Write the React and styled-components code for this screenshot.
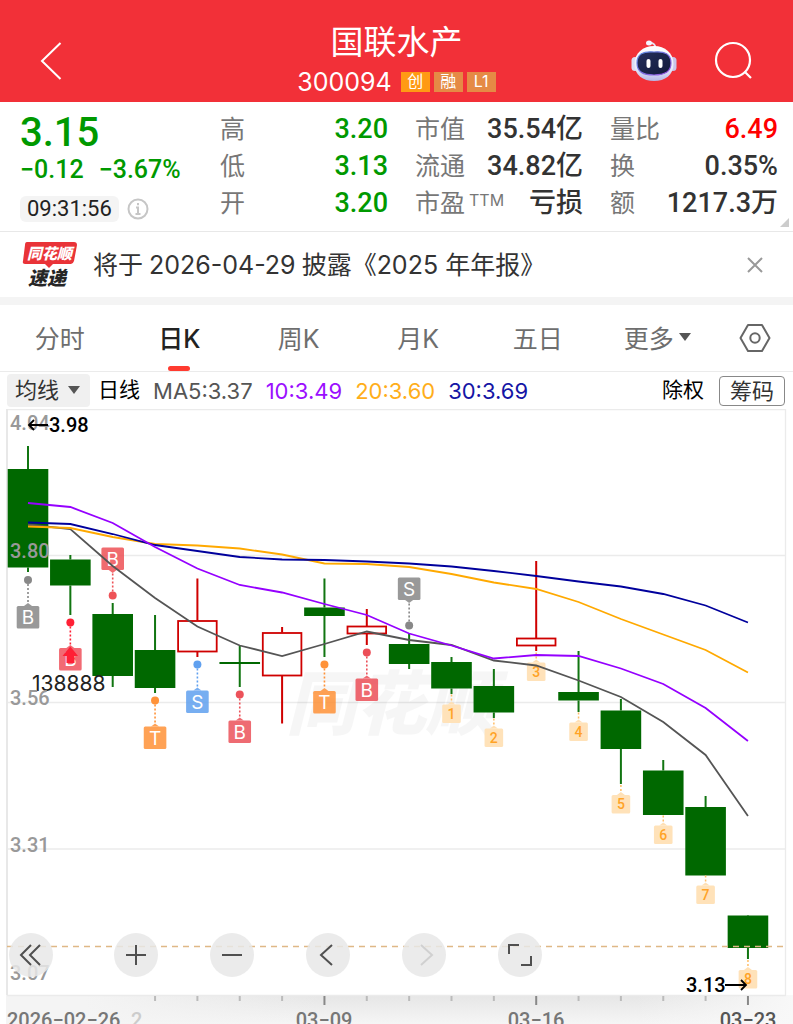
import React, { useState } from 'react';
import styled, { createGlobalStyle } from 'styled-components';

const ui = '"Inter", "Noto Sans CJK SC", sans-serif';
const din = '"Roboto", "Noto Sans CJK SC", sans-serif';

const GlobalStyle = createGlobalStyle`
	* {
		box-sizing: border-box;
	}

	body {
		margin: 0;
		background: #fff;
		color: #333;
		font-family: ${ui};
	}

	button {
		margin: 0;
		padding: 0;
		border: none;
		background: none;
		color: inherit;
		font: inherit;
		cursor: pointer;
	}

	svg {
		display: block;
	}
`;

const Header = styled.header`
	height: 102px;
	padding: 0 40px;
	display: grid;
	grid-template-columns: 1fr auto 1fr;
	align-items: center;
	background: #f23038;
	color: #fff;
`;

const BackButton = styled.button`
	justify-self: start;
	margin-top: 20px;
`;

const HeaderActions = styled.div`
	display: flex;
	justify-content: flex-end;
	align-items: center;
	gap: 36px;
	padding-top: 20px;
`;

const TitleBlock = styled.div`
	text-align: center;
	padding-top: 14px;
`;

const Title = styled.h1`
	margin: 0;
	font-size: 33px;
	font-weight: 400;
	line-height: 48px;
`;

const CodeRow = styled.div`
	display: flex;
	align-items: center;
	justify-content: center;
	gap: 4px;
	font-size: 25px;
	line-height: 32px;
`;

const Code = styled.span`
	margin-right: 5px;
`;

const Badge = styled.span`
	width: 29px;
	height: 20px;
	background: ${props => props.$color};
	font-size: 16px;
	line-height: 19px;
	text-align: center;
`;

const Quote = styled.section`
	position: relative;
	display: flex;
	padding: 9px 15px 9px 20px;
	border-bottom: 1px solid #e8e8e8;
`;

const PriceBlock = styled.div`
	width: 200px;
	font-family: ${din};
	font-weight: 500;
	color: #009900;
`;

const Price = styled.div`
	font-size: 40px;
	line-height: 44px;
`;

const Change = styled.div`
	display: flex;
	gap: 15px;
	font-size: 25px;
	line-height: 30px;
`;

const TimeRow = styled.div`
	display: flex;
	align-items: center;
	gap: 8px;
	margin-top: 11px;
`;

const Time = styled.time`
	padding: 0 7px;
	border-radius: 6px;
	background: #f4f4f4;
	color: #222;
	font-size: 22px;
	font-weight: 400;
	line-height: 26px;
`;

const Stats = styled.dl`
	flex: 1;
	margin: 0;
	display: grid;
	grid-template-columns: repeat(3, 1fr);
	column-gap: 27px;
`;

const Stat = styled.div`
	display: flex;
	justify-content: space-between;
	height: 37px;
	line-height: 37px;
	white-space: nowrap;
`;

const StatLabel = styled.dt`
	display: flex;
	color: #777;
	font-size: 25px;
`;

const Suffix = styled.span`
	margin-left: 4px;
	font-size: 16px;
	line-height: 30px;
`;

const StatValue = styled.dd`
	margin: 0;
	font-family: ${din};
	font-size: 27px;
	font-weight: 500;
	color: ${props => props.$color || '#333'};
`;

const Corner = styled.span`
	position: absolute;
	right: 4px;
	bottom: 4px;
	border-left: 9px solid transparent;
	border-bottom: 9px solid #ccc;
`;

const News = styled.section`
	display: flex;
	align-items: center;
	gap: 16px;
	height: 73px;
	padding: 0 28px 0 22px;
	border-bottom: 8px solid #f4f4f4;
`;

const NewsLink = styled.a`
	flex: 1;
	padding-bottom: 3px;
	color: #333;
	font-size: 25px;
	text-decoration: none;
	white-space: nowrap;
`;

const NewsDate = styled.span`
	margin: 0 6px;
`;

const Tabs = styled.nav`
	display: grid;
	grid-template-columns: repeat(6, 1fr) 76px;
	height: 67px;
	border-bottom: 1px solid #ebebeb;
`;

const Tab = styled.button`
	position: relative;
	display: flex;
	align-items: center;
	justify-content: center;
	gap: 5px;
	padding-bottom: 2px;
	color: ${props => (props.$active ? '#222' : '#6e6e6e')};
	font-size: 25px;
	font-weight: ${props => (props.$active ? 500 : 400)};

	&::after {
		content: '';
		position: absolute;
		bottom: 0;
		width: 22px;
		height: 5px;
		border-radius: 3px;
		background: ${props => (props.$active ? '#ff3b30' : 'transparent')};
	}
`;

const Caret = styled.span`
	border: 6px solid transparent;
	border-top: 8px solid #555;
	border-bottom: none;
`;

const SettingsButton = styled.button`
	display: flex;
	align-items: center;
	justify-content: center;
`;

const Legend = styled.div`
	display: flex;
	align-items: center;
	height: 37px;
	padding: 0 8px 0 7px;
	font-size: 22px;
	line-height: 28px;
	white-space: nowrap;
`;

const AverageButton = styled.button`
	display: flex;
	align-items: center;
	gap: 9px;
	height: 33px;
	padding: 0 10px 2px 8px;
	margin-right: 8px;
	border-radius: 4px;
	background: #f0f0f0;
`;

const Period = styled.span`
	margin-right: 13px;
	padding-bottom: 2px;
	color: #000;
	font-size: 21px;
`;

const Average = styled.span`
	margin-right: 13px;
	color: ${props => props.$color};
`;

const Rights = styled.button`
	margin-left: auto;
	margin-right: 15px;
	padding-bottom: 2px;
	color: #000;
	font-size: 21px;
`;

const Chips = styled.button`
	width: 66px;
	height: 30px;
	border: 1px solid #888;
	border-radius: 4px;
	line-height: 26px;
`;

const ChartArea = styled.main`
	position: relative;
`;

const Chart = styled.svg`
	width: 100%;
	height: auto;
	overflow: hidden;
`;

const ChartTools = styled.div`
	position: absolute;
	left: 9px;
	bottom: 47px;
	display: flex;
	gap: 52px;
`;

const ToolButton = styled.button`
	width: 44px;
	height: 44px;
	border-radius: 50%;
	background: rgba(232, 232, 232, 0.85);
	color: ${props => (props.disabled ? '#d0d0d0' : '#505050')};

	&:first-child {
		margin-right: 9px;
	}
`;

const stats = [
	{ label: '高', value: '3.20', color: '#009900' },
	{ label: '市值', value: '35.54亿' },
	{ label: '量比', value: '6.49', color: '#ff0000' },
	{ label: '低', value: '3.13', color: '#009900' },
	{ label: '流通', value: '34.82亿' },
	{ label: '换', value: '0.35%' },
	{ label: '开', value: '3.20', color: '#009900' },
	{ label: '市盈', suffix: 'TTM', value: '亏损' },
	{ label: '额', value: '1217.3万' },
];

const tabs = ['分时', '日K', '周K', '月K', '五日', '更多'];

const averages = [
	{ text: 'MA5:3.37', color: '#555' },
	{ text: '10:3.49', color: '#9b0fff' },
	{ text: '20:3.60', color: '#ffae1a' },
	{ text: '30:3.69', color: '#1515a5' },
];

// chart geometry, in viewBox units
const STEP = 42.35;
const xAt = index => 28 + index * STEP;

// high, body top, body bottom, low, rising
const candles = [
	[446, 469, 567.5, 572],
	[555, 559.5, 585.5, 615],
	[603, 614, 676, 687],
	[615, 650, 688, 693],
	[578.5, 620.5, 652, 657, true],
	[646, 662, 664, 687],
	[627, 632.5, 676, 723.5, true],
	[578.5, 607.5, 616, 657],
	[609, 626, 634, 645, true],
	[634, 644, 664, 669],
	[657, 662, 688.5, 694],
	[669, 686, 712.5, 718],
	[561, 638, 646, 651, true],
	[651, 692, 700.5, 712],
	[699, 710.5, 749, 784],
	[760, 770.5, 815, 815],
	[796, 807, 875.5, 875.5],
	[916, 915.5, 948, 959],
];

const lines = [
	{
		color: '#555',
		ys: [524.5, 529, 566, 598, 626.5, 645.5, 656, 644, 631.5, 640, 645, 660.5, 665.5, 680.5, 697, 722, 755, 816],
	},
	{
		color: '#ffa900',
		ys: [526.5, 528, 537, 544, 545.5, 548.5, 554.5, 563.5, 564, 567, 574, 582.5, 589, 602, 619, 634.5, 650, 672.5],
	},
	{
		color: '#00009c',
		ys: [522.5, 524, 534, 545, 551, 557, 559.5, 560, 561.5, 563.5, 566.5, 571, 576, 581.5, 586.5, 594, 605.5, 622.5],
	},
	{
		color: '#9500ff',
		ys: [503, 507, 523, 547, 568.5, 585, 592.5, 604, 615, 633.5, 645.5, 658.5, 655, 656, 668.5, 684, 708, 741],
	},
];

const signals = [
	{ index: 0, letter: 'B', dot: 580, top: 606, color: '#888' },
	{ index: 1, letter: 'B', dot: 622.5, top: 648, color: '#f0515b', dotColor: '#ff2035' },
	{ index: 2, letter: 'B', dot: 595.5, top: 547.5, color: '#ee5257' },
	{ index: 3, letter: 'T', dot: 700.5, top: 726.5, color: '#ff9238' },
	{ index: 4, letter: 'S', dot: 664.5, top: 690.5, color: '#60a0ef' },
	{ index: 5, letter: 'B', dot: 694.5, top: 720.5, color: '#ec525a' },
	{ index: 7, letter: 'T', dot: 664.5, top: 691, color: '#ff9238' },
	{ index: 8, letter: 'B', dot: 652.5, top: 678.5, color: '#ec4f58' },
	{ index: 9, letter: 'S', dot: 625.5, top: 577.5, color: '#888' },
];

const counts = [704.5, 728.5, 662.5, 722.5, 795, 825.5, 885.5, 970];

const scale = [
	{ text: '4.04', y: 430 },
	{ text: '3.80', y: 558 },
	{ text: '3.56', y: 705 },
	{ text: '3.31', y: 852 },
	{ text: '3.07', y: 980 },
];

const Candle = ({ index, data }) => {
	const [high, top, bottom, low, rising] = data;
	const x = xAt(index);
	const color = rising ? '#cf0000' : '#006800';
	return (
		<g>
			<path d={`M${x} ${high}V${top}M${x} ${bottom}V${low}`} stroke={rising ? color : '#117511'} strokeWidth="2" />
			{rising ? (
				<rect x={x - 19.3} y={top + 0.5} width="38.6" height={bottom - top - 1} fill="none" stroke={color} strokeWidth="1.8" />
			) : (
				<rect x={x - 20.3} y={top} width="40.6" height={bottom - top} fill={color} />
			)}
		</g>
	);
};

const Signal = ({
	index, letter, dot, top, color, dotColor,
}) => {
	const x = xAt(index);
	const below = top > dot;
	const edge = below ? top : top + 22.5;
	const tip = below ? edge - 3 : edge + 3;
	return (
		<g>
			<path d={`M${x} ${dot}V${tip}`} stroke={dotColor || color} strokeWidth="1.6" strokeDasharray="2 2" />
			<circle cx={x} cy={dot} r="4" fill={dotColor || color} />
			<g opacity="0.85">
				<rect x={x - 11.3} y={top} width="22.6" height="22.5" rx="1.5" fill={color} />
				<path d={`M${x - 4} ${edge}L${x} ${tip}L${x + 4} ${edge}Z`} fill={color} />
			</g>
			<text x={x} y={top + 18} textAnchor="middle" fontFamily="Inter" fontSize="19" fill="#fff">{letter}</text>
		</g>
	);
};

const Count = ({ number, top }) => {
	const x = xAt(number + 9);
	return (
		<g>
			<path d={`M${x} ${top - 10}V${top - 3}`} stroke="#ffbd66" strokeWidth="1.5" strokeDasharray="2 2" />
			<path d={`M${x - 4} ${top}L${x} ${top - 3}L${x + 4} ${top}Z`} fill="#ffe0b5" />
			<rect x={x - 9.3} y={top} width="18.6" height="18.5" rx="1.5" fill="#ffe0b5" opacity="0.95" />
			<text x={x} y={top + 14} textAnchor="middle" fontFamily="Roboto" fontSize="14" fontWeight="500" fill="#ffa326">{number}</text>
		</g>
	);
};

const Robot = () => (
	<svg width="46" height="42" viewBox="0 0 46 42">
		<defs>
			<linearGradient id="shell" x1="0" y1="0" x2="0" y2="1">
				<stop offset="0" stopColor="#fff" />
				<stop offset="0.65" stopColor="#e8eafa" />
				<stop offset="1" stopColor="#b4b5e6" />
			</linearGradient>
			<linearGradient id="visor" x1="0" y1="0" x2="1" y2="1">
				<stop offset="0" stopColor="#252f5c" />
				<stop offset="1" stopColor="#12183a" />
			</linearGradient>
			<linearGradient id="rim" x1="0" y1="0" x2="1" y2="1">
				<stop offset="0" stopColor="#5c8fe5" />
				<stop offset="1" stopColor="#9a50df" />
			</linearGradient>
		</defs>
		<path d="M18 3Q24 2.5 24.5 8" fill="none" stroke="#e6e4f2" strokeWidth="1.8" />
		<ellipse cx="18" cy="3" rx="3" ry="2.5" fill="#f4f4ff" />
		<rect x="0.5" y="17" width="7" height="14" rx="3.5" fill="#dcdcf4" />
		<rect x="38.5" y="17" width="7" height="14" rx="3.5" fill="#c9c4ea" />
		<path d="M23 6C34 6 42.5 13 42.5 24S34 41 23 41S3.5 35 3.5 24S12 6 23 6Z" fill="url(#shell)" />
		<path d="M23 12C34 11 40 14 40 23C40 32 34 35 23 35S6 32 6 23C6 14 12 11 23 12Z" fill="url(#visor)" stroke="url(#rim)" strokeWidth="1.2" />
		<rect x="15.5" y="19" width="4" height="9" rx="2" fill="#fff" />
		<rect x="27.5" y="19" width="4" height="9" rx="2" fill="#fff" />
	</svg>
);

const NewsLogo = () => (
	<svg width="55" height="50" viewBox="0 -1 55 50" fontFamily="Noto Sans CJK SC" fontWeight="900" fontStyle="italic">
		<path d="M5 1H52Q55 1 55 4L52 20Q51 23 49 23H31L27 27L23 23H3Q0 23 1 20L3 4Q3 1 5 1Z" fill="#e93338" />
		<text x="5" y="18" fontSize="15" fill="#fff">同花顺</text>
		<text x="6" y="44" fontSize="19" fill="#262626">速递</text>
	</svg>
);

const toolIcons = [
	{ name: '后退', d: 'M22 12L12 22L22 32M31 12L21 22L31 32' },
	{ name: '放大', d: 'M22 12V32M12 22H32' },
	{ name: '缩小', d: 'M12 22H32' },
	{ name: '左移', d: 'M26 12L15 22L26 32' },
	{ name: '右移', d: 'M19 12L30 22L19 32', disabled: true },
	{ name: '全屏', d: 'M11 21V12H21M33 23V32H23' },
];

const PriceChart = () => (
	<Chart viewBox="0 409 793 615" role="img" aria-label="日K">
		<defs>
			<linearGradient id="axis" x1="0" y1="0" x2="0" y2="1">
				<stop offset="0" stopColor="#e6e6e6" />
				<stop offset="1" stopColor="#f5f5f5" />
			</linearGradient>
			<linearGradient id="axisFade" x1="0" y1="0" x2="1" y2="0">
				<stop offset="0.1" stopColor="#f4f4f4" />
				<stop offset="0.4" stopColor="#f4f4f4" stopOpacity="0" />
				<stop offset="0.8" stopColor="#f8f8f8" stopOpacity="0" />
				<stop offset="1" stopColor="#f8f8f8" />
			</linearGradient>
		</defs>
		<rect x="6" y="995" width="787" height="29" fill="url(#axis)" />
		<rect x="6" y="995" width="787" height="29" fill="url(#axisFade)" />
		<path d="M7 409.5H786M7 555.5H786M7 702.5H786M7 849H786M7 995.5H786M785.5 409V995" stroke="#ebebeb" strokeWidth="1.3" />
		<path d="M7 409V995" stroke="#e8e8e8" strokeWidth="2" />
		<text x="286" y="729" fontFamily="Noto Sans CJK SC" fontSize="70" fontWeight="900" fontStyle="italic" fill="#000" opacity="0.03">同花顺</text>

		{candles.map((data, index) => (
			<Candle key={index} index={index} data={data} />
		))}
		{signals.map(signal => (
			<Signal key={signal.index} {...signal} />
		))}
		{counts.map((top, index) => (
			<Count key={top} number={index + 1} top={top} />
		))}
		{lines.map(({ color, ys }) => (
			<polyline
				key={color}
				points={ys.map((y, index) => `${xAt(index)},${y}`).join(' ')}
				fill="none"
				stroke={color}
				strokeWidth="1.8"
			/>
		))}
		<path d="M7 946.5H785" stroke="#dfb886" strokeWidth="1.3" strokeDasharray="6 5" />

		<path d="M70.3 646.5L78 656H74.5V663H66.5V656H62.5Z" fill="#ff2035" />
		<text x="32" y="691" fontFamily="Inter" fontSize="21" fill="#222">138888</text>

		<g fontFamily="Roboto" fontSize="20" fontWeight="500">
			{scale.map(({ text, y }) => (
				<text key={text} x="10" y={y} fill="#999">{text}</text>
			))}
			<text x="49" y="432" fill="#000">3.98</text>
			<text x="686" y="992" fill="#000">3.13</text>
			<g fill="#777">
				<text x="7" y="1027">2026−02−26</text>
				<text x="131" y="1027" fill="#ccc">2</text>
				<text x="324" y="1027" textAnchor="middle">03−09</text>
				<text x="536" y="1027" textAnchor="middle">03−16</text>
				<text x="748" y="1027" textAnchor="middle" fill="#555">03−23</text>
			</g>
		</g>
		<path d="M48 425H29M34 420L29 425L34 430M725 985H746M741 980L746 985L741 990" fill="none" stroke="#000" strokeWidth="1.8" />
		{candles.map((data, index) => index > 2 && (
			<path
				key={index}
				d={`M${xAt(index)} 996V${index % 5 === 2 ? 1005 : 1001}`}
				stroke={index % 5 === 2 ? '#888' : '#bbb'}
				strokeWidth="2"
			/>
		))}
	</Chart>
);

const App = () => {
	const [active, setActive] = useState('日K');
	const [newsOpen, setNewsOpen] = useState(true);

	return (
		<>
			<GlobalStyle />
			<Header>
				<BackButton type="button" aria-label="返回">
					<svg width="22" height="38" viewBox="0 0 22 38" fill="none" stroke="#fff" strokeWidth="2">
						<path d="M20.5 1L2 19L20.5 37" />
					</svg>
				</BackButton>
				<TitleBlock>
					<Title>国联水产</Title>
					<CodeRow>
						<Code>300094</Code>
						<Badge $color="#ff9a14">创</Badge>
						<Badge $color="#e58a45">融</Badge>
						<Badge $color="#e58a45">L1</Badge>
					</CodeRow>
				</TitleBlock>
				<HeaderActions>
					<button type="button" aria-label="助手"><Robot /></button>
					<button type="button" aria-label="搜索">
						<svg width="40" height="40" viewBox="0 0 40 40" fill="none" stroke="#fff" strokeWidth="2.2">
							<circle cx="20" cy="19" r="17" />
							<path d="M31.5 30.5L38 37" />
						</svg>
					</button>
				</HeaderActions>
			</Header>

			<Quote>
				<PriceBlock>
					<Price>3.15</Price>
					<Change>
						<span>−0.12</span>
						<span>−3.67%</span>
					</Change>
					<TimeRow>
						<Time>09:31:56</Time>
						<svg width="22" height="22" viewBox="0 0 22 22" fill="none" stroke="#c6c6c6" strokeWidth="2">
							<circle cx="11" cy="11" r="9.5" />
							<path d="M9 9.5H11V16M8.5 16H13.5M11 5V7.3" />
						</svg>
					</TimeRow>
				</PriceBlock>
				<Stats>
					{stats.map(({
						label, suffix, value, color,
					}) => (
						<Stat key={label}>
							<StatLabel>
								{label}
								{suffix && <Suffix>{suffix}</Suffix>}
							</StatLabel>
							<StatValue $color={color}>{value}</StatValue>
						</Stat>
					))}
				</Stats>
				<Corner />
			</Quote>

			{newsOpen && (
				<News>
					<NewsLogo />
					<NewsLink href="#news">
						将于
						<NewsDate>2026-04-29</NewsDate>
						披露《2025
						{' '}
						年年报》
					</NewsLink>
					<button type="button" aria-label="关闭" onClick={() => setNewsOpen(false)}>
						<svg width="20" height="20" viewBox="0 0 20 20" fill="none" stroke="#999" strokeWidth="2">
							<path d="M3 3L17 17M17 3L3 17" />
						</svg>
					</button>
				</News>
			)}

			<Tabs>
				{tabs.map(tab => (
					<Tab key={tab} type="button" $active={tab === active} onClick={() => setActive(tab)}>
						{tab}
						{tab === '更多' && <Caret />}
					</Tab>
				))}
				<SettingsButton type="button" aria-label="设置">
					<svg width="32" height="30" viewBox="0 0 32 30" fill="none" stroke="#666" strokeWidth="2">
						<path d="M9 2H23L30.5 15L23 28H9L1.5 15Z" strokeLinejoin="round" />
						<circle cx="16" cy="15" r="4.7" />
					</svg>
				</SettingsButton>
			</Tabs>

			<Legend>
				<AverageButton type="button">
					均线
					<Caret />
				</AverageButton>
				<Period>日线</Period>
				{averages.map(({ text, color }) => (
					<Average key={text} $color={color}>{text}</Average>
				))}
				<Rights type="button">除权</Rights>
				<Chips type="button">筹码</Chips>
			</Legend>

			<ChartArea>
				<PriceChart />
				<ChartTools>
					{toolIcons.map(({ name, d, disabled }) => (
						<ToolButton key={name} type="button" aria-label={name} disabled={disabled}>
							<svg width="44" height="44" viewBox="0 0 44 44" fill="none" stroke="currentColor" strokeWidth="2">
								<path d={d} />
							</svg>
						</ToolButton>
					))}
				</ChartTools>
			</ChartArea>
		</>
	);
};

export default App;
